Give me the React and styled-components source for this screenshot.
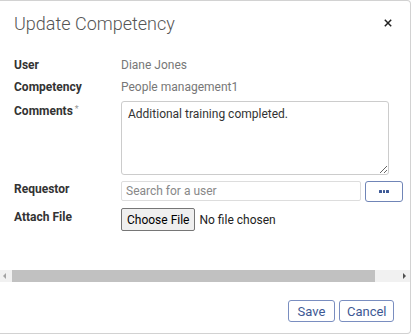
import React from 'react';
import styled, { createGlobalStyle } from 'styled-components';

const GlobalStyle = createGlobalStyle`
	html, body {
		margin: 0;
		padding: 0;
		background: #fff;
		font-family: Roboto, "Liberation Sans", sans-serif;
	}
	* { box-sizing: border-box; }
`;

const Dialog = styled.div`
	width: 411px;
	height: 334px;
	border: 1px solid #d2d2d2;
	border-left: none;
	border-radius: 0 4px 4px 0;
	background: #fff;
	display: flex;
	flex-direction: column;
	overflow: hidden;
`;

const Header = styled.div`
	height: 44px;
	display: flex;
	align-items: center;
	justify-content: space-between;
	padding: 0 16px 0 14px;
`;

const Title = styled.h2`
	margin: 0;
	font-size: 18px;
	font-weight: 300;
	color: #555;
`;

const Close = styled.button`
	border: none;
	background: none;
	padding: 0;
	width: 12px;
	height: 12px;
	display: flex;
	align-items: center;
	justify-content: center;
	cursor: pointer;
`;

const Body = styled.div`
	padding: 12px 0 0 14px;
	display: flex;
	flex-direction: column;
	gap: 6px;
`;

const Row = styled.div`
	display: grid;
	grid-template-columns: 107px auto;
	align-items: start;
`;

const Label = styled.div`
	font-size: 12px;
	line-height: 16px;
	font-weight: 700;
	color: #333;
	padding-top: ${(p) => p.offset || 0}px;
`;

const Req = styled.sup`
	color: #999;
	font-weight: 400;
	font-size: 9px;
	margin-left: 2px;
	vertical-align: 3px;
`;

const Value = styled.div`
	font-size: 12px;
	line-height: 16px;
	color: #777;
`;

const TextArea = styled.textarea`
	width: 268px;
	height: 74px;
	border: 1px solid #ccc;
	border-radius: 3px;
	padding: 5px 6px;
	font-family: inherit;
	font-size: 12px;
	color: #333;
	resize: both;
	outline: none;
	display: block;
`;

const InputGroup = styled.div`
	display: flex;
	gap: 4px;
`;

const SearchInput = styled.input`
	width: 240px;
	height: 20px;
	border: 1px solid #ddd;
	border-radius: 2px;
	padding: 0 4px;
	font-family: inherit;
	font-size: 12px;
	color: #333;
	outline: none;
	&::placeholder { color: #888; }
`;

const MoreButton = styled.button`
	width: 38px;
	height: 21px;
	border: 1px solid #7085b7;
	border-radius: 3px;
	background: #fff;
	display: flex;
	align-items: center;
	justify-content: center;
	gap: 1px;
	padding: 0;
	span {
		width: 2.5px;
		height: 2.5px;
		background: #3e5a97;
		border-radius: 0.5px;
	}
`;

const FileInput = styled.input`
	font-family: inherit;
	font-size: 12px;
	color: #222;
	&::file-selector-button {
		font-family: inherit;
		font-size: 12px;
		height: 23px;
		padding: 0 5px;
		margin-right: 4px;
		border: 1px solid #767676;
		border-radius: 2px;
		background: #efefef;
		color: #000;
	}
`;

const ScrollBar = styled.div`
	margin-top: auto;
	margin-bottom: 18px;
	height: 12px;
	background: #f1f1f1;
	display: flex;
	align-items: center;
	padding: 0 4px 0 3px;
`;

const Arrow = styled.span`
	width: 0;
	height: 0;
	border-top: 3px solid transparent;
	border-bottom: 3px solid transparent;
	${(p) => p.dir === 'left'
		? 'border-right: 3px solid #a3a3a3;'
		: 'border-left: 3px solid #505050;'}
`;

const Thumb = styled.div`
	width: 363px;
	height: 12px;
	background: #c1c1c1;
	margin-left: 6px;
	margin-right: auto;
`;

const Footer = styled.div`
	display: flex;
	justify-content: flex-end;
	gap: 4px;
	padding: 0 16px 11px 0;
`;

const Button = styled.button`
	height: 22px;
	padding: 0 ${(p) => p.pad || 8}px;
	border: 1px solid #7a8ec0;
	border-radius: 3px;
	background: #fff;
	color: #3d5894;
	font-family: inherit;
	font-size: 13px;
`;

export default function App() {
	return (
		<>
			<GlobalStyle />
			<Dialog>
				<Header>
					<Title>Update Competency</Title>
					<Close aria-label="close">
						<svg width="8" height="8" viewBox="0 0 8 8">
							<path d="M0.8 0.8 L7.2 7.2 M7.2 0.8 L0.8 7.2" stroke="#222" strokeWidth="1.5" />
						</svg>
					</Close>
				</Header>
				<Body>
					<Row>
						<Label>User</Label>
						<Value>Diane Jones</Value>
					</Row>
					<Row>
						<Label>Competency</Label>
						<Value>People management1</Value>
					</Row>
					<Row>
						<Label>Comments<Req>*</Req></Label>
						<TextArea defaultValue="Additional training completed." />
					</Row>
					<Row>
						<Label offset={-1}>Requestor</Label>
						<InputGroup>
							<SearchInput placeholder="Search for a user" />
							<MoreButton><span /><span /><span /></MoreButton>
						</InputGroup>
					</Row>
					<Row>
						<Label offset={1}>Attach File</Label>
						<FileInput type="file" />
					</Row>
				</Body>
				<ScrollBar>
					<Arrow dir="left" />
					<Thumb />
					<Arrow dir="right" />
				</ScrollBar>
				<Footer>
					<Button pad={9}>Save</Button>
					<Button pad={6.5}>Cancel</Button>
				</Footer>
			</Dialog>
		</>
	);
}
